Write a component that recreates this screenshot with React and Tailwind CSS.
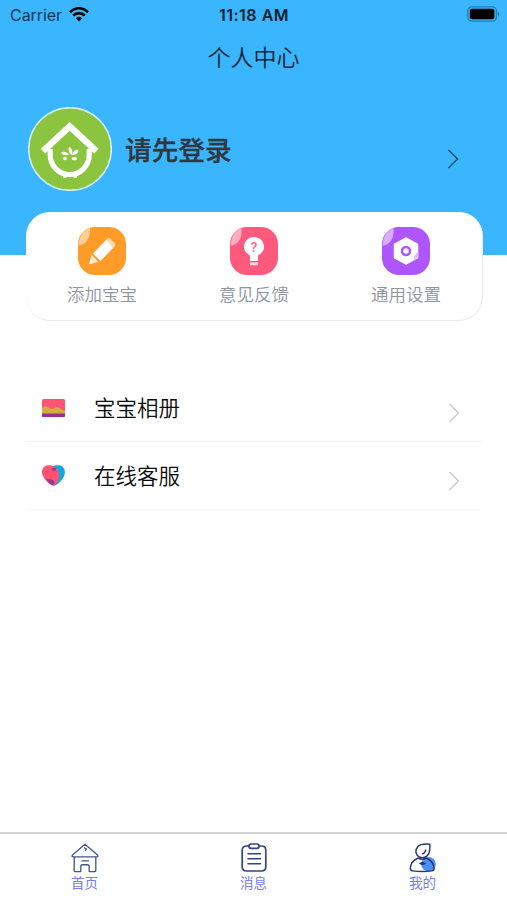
import React from "react";

function StatusBar() {
  return (
    <div className="grid h-[30px] grid-cols-3 items-center pl-[10px] pr-[7px] text-black">
      <div className="flex items-center gap-[7px]">
        <span className="text-[16px] leading-[20px] tracking-[-0.05px] text-[#10374f]">Carrier</span>
        <svg className="-mt-[1px]" width="20" height="15" viewBox="0 0 20 15" fill="none" stroke="#000" strokeWidth="2.7">
          <path d="M1 5.200C6-.1 14-.1 19 5.200" />
          <path d="M4.200 8.500c3.400-3.300 8.200-3.300 11.600 0" />
          <path d="M6.700 11.200c2-1.800 4.600-1.800 6.600 0L10 14.600Z" fill="#000" stroke="none" />
        </svg>
      </div>
      <span className="-ml-[2px] text-center text-[16px] font-semibold leading-[20px] tracking-[0.5px] text-[#06212f]">11:18 AM</span>
      <svg className="-mt-[2px] justify-self-end" width="33" height="16" viewBox="0 0 33 16">
        <rect x=".8" y=".8" width="28.6" height="14.4" rx="4" fill="none" stroke="#237fae" strokeWidth="1.3" />
        <rect x="2.8" y="2.8" width="24.6" height="10.4" rx="2" fill="#000" />
        <path d="M30.800 5.500c2 .8 2 4.200 0 5Z" fill="#237fae" />
      </svg>
    </div>
  );
}

function Avatar() {
  return (
    <svg width="84" height="84" viewBox="0 0 84 84">
      <circle cx="42" cy="42" r="41.300" fill="#8bc53f" stroke="#d9f3f5" strokeWidth="1.500" />
      <path d="M15 44.200 41.700 19.300 68.400 44.200" fill="none" stroke="#fff" strokeWidth="6.400" />
      <path d="M22.200 42v6a19.500 19.500 0 0 0 39 0v-6" fill="none" stroke="#fff" strokeWidth="5.200" />
      <path d="M35 70h3.500M45.500 70H49" stroke="#fff" strokeWidth="1.500" />
      <g fill="#fff">
        <path d="M33 45.500c2.500-1.500 6-1 8 2.300-3 .9-6.500.7-8-2.300Z" />
        <path d="M41 39.700c3.200 1.800 4.200 4.800 2.500 8.300-2.800-2.200-3.600-5-2.500-8.300Z" />
        <path d="M50.500 42.500c.2 3.500-2.300 5.500-6.500 5.500.8-3.500 3-5.500 6.500-5.500Z" />
        <ellipse cx="37" cy="51.500" rx="1.900" ry="1.700" />
        <ellipse cx="46.300" cy="51.700" rx="2.700" ry="1.600" />
      </g>
    </svg>
  );
}

function Chevron({ className }) {
  return (
    <svg className={className} width="12" height="20" viewBox="0 0 12 20" fill="none" stroke="currentColor" strokeWidth="1.600">
      <path d="m1.500 1 9 9-9 9" />
    </svg>
  );
}

function PencilIcon() {
  return (
    <svg width="48" height="48" viewBox="0 0 48 48">
      <rect width="48" height="48" rx="17" fill="#ff9c28" />
      <path d="M.6 18.500C7.500 18 12.800 11.500 12 .8 5 3.500.8 9 .6 18.500Z" fill="#ffcf96" />
      <path d="m15 26.500 13.500-14 7 8L22.500 34Z" fill="#fff" />
      <path d="m28 12.500 1.200-.9c1-.8 2.300-.8 3.300.2l4.200 4.600c.9 1 .7 2.100-.2 3L34.800 21Z" fill="#ffdcaf" />
      <path d="m13.500 27.500 7 7.500-9.200 2Z" fill="#ffe8cd" />
      <path d="m12.200 32.500 3.300 3.600-4 .9Z" fill="#fff" />
    </svg>
  );
}

function BulbIcon() {
  return (
    <svg width="48" height="48" viewBox="0 0 48 48">
      <rect width="48" height="48" rx="17" fill="#ff5a7d" />
      <path d="M.6 18.800C7.500 18 12.800 11.500 11.500 1 5 3.500.8 9 .6 18.800Z" fill="#ffafc0" />
      <path d="M24 10c-5.700 0-10 4.300-10 9.800 0 4 2.300 6.500 6 8.700V34h8v-5.500c3.700-2.200 6-4.700 6-8.700C34 14.300 29.700 10 24 10Z" fill="#fff" />
      <path d="M20 35.500h8v2.700h-8Z" fill="#ffe0e7" />
      <text x="24" y="25" textAnchor="middle" fontSize="13" fontWeight="500" fontFamily="Inter, sans-serif" fill="#ff5a7d">?</text>
    </svg>
  );
}

function SettingsIcon() {
  return (
    <svg width="48" height="48" viewBox="0 0 48 48">
      <rect width="48" height="48" rx="17" fill="#ae55fb" />
      <path d="M.6 18.800C7.500 18 12.800 11.500 11.500 1 5 3.500.8 9 .6 18.800Z" fill="#d8adff" />
      <path d="M24 11.500 35 17.700v12.600L24 36.500 13 30.300V17.700Z" fill="#fff" stroke="#fff" strokeWidth="2.500" strokeLinejoin="round" />
      <circle cx="24" cy="24" r="4" fill="#fff" stroke="#ae55fb" strokeWidth="2.500" />
      <path d="M36.300 25v4c0 1-.4 1.700-1.300 2.200L32 33c-.5-3.500 1-6.500 4.300-8Z" fill="#dfbdff" />
    </svg>
  );
}

function AlbumIcon() {
  return (
    <svg width="23" height="18" viewBox="0 0 23 18">
      <rect width="23" height="18" rx="1.500" fill="#ff5572" />
      <path d="M0 9.500C2 7 4.500 7 6.500 8.500c1.500 1.200 3 1.700 4.800 1.200C14 7.500 17 8 19.500 10.500L23 12v3H0Z" fill="#ccb039" />
      <path d="M8 11.500c1.500-1 2.500-.5 4 1l2-1.500" fill="none" stroke="#f1a23c" />
      <path d="M0 14.500h23v2c0 1-.5 1.500-1.500 1.500h-20C.5 18 0 17.500 0 16.500Z" fill="#9b2f92" />
    </svg>
  );
}

function HeartIcon() {
  return (
    <svg width="23" height="21" viewBox="0 0 23 21">
      <path d="M10.500 1.500C13 0 17.500-.3 20.300 1.500c3.200 2.500 3.200 7 1 11-2.300 4-6 7.500-9.500 8.300Z" fill="#10a9df" />
      <path d="M12.500 2.200C9-.5 4.500-.2 2 2-.8 4.500-.5 9 1.500 12c2.300 4 6 8 10 8.800 4.500-3.300 6.500-8 5.500-12.800-.5-2.500-2.300-4.500-4.500-5.800Z" fill="#ff5272" />
      <path d="M9.500 4c1-1.300 2.500-1.700 4-1l.7 2.500C12 6.500 10 6 9.500 4ZM4.500 14.500c3-1 6.500 0 8 2.500l-1 3.500C8.500 19.500 6 17 4.500 14.500Z" fill="#a13292" />
    </svg>
  );
}

function HomeIcon() {
  return (
    <svg width="28" height="30" viewBox="0 0 28 30" fill="none" stroke="#45568b" strokeWidth="1.350" strokeLinejoin="round">
      <path d="M14 1.200 26.500 12c.8.800.5 1.900-.6 1.900H2.100C1 13.900.7 12.800 1.500 12ZM3.200 14v13.800c0 .5.300.8.800.8h5.800v-5.300c0-1 .6-1.600 1.600-1.600h5.200c1 0 1.600.6 1.600 1.600v5.300H24c.5 0 .8-.3.800-.8V14" />
      <path d="m13 4.500 2.500 1.500-1.500 1.500M10.500 17.800h7.500" />
    </svg>
  );
}

function ClipboardIcon() {
  return (
    <svg width="28" height="30" viewBox="0 0 28 30" fill="none" stroke="#34457e" strokeWidth="1.700" strokeLinecap="round">
      <path d="M8.500 3H6.500C3.700 3 2.200 4.500 2.200 7.300v16.400c0 2.800 1.500 4.300 4.300 4.300h15c2.800 0 4.300-1.500 4.300-4.300V7.300C25.800 4.500 24.300 3 21.500 3h-2" />
      <rect x="9" y="1" width="10" height="4.300" rx="2" />
      <path d="M8 10.800h12.500M8 15.800h12.500M8 20.800h12.500" strokeWidth="1.600" />
    </svg>
  );
}

function ProfileIcon() {
  return (
    <svg width="28" height="30" viewBox="0 0 28 30" fill="none" stroke="#28376d" strokeWidth="1.450" strokeLinejoin="round">
      <circle cx="19.500" cy="21.200" r="7.300" fill="#4b8ff8" stroke="none" />
      <path d="M20.800 1.200c-4.500-.4-9.300-.3-12 2.500-3 3.300-2.300 8.500 1.700 10.300 3.300 1.400 7.300.3 9-2.800 1.500-2.700 1.600-6.200 1.300-10Z" fill="#fff" />
      <path d="M16.700 6.500c-.2 2.400-1.500 4-3.700 4.500M9 15c-4.500 2-7.300 5.500-7.700 10-.1 1.600.7 2.700 2.300 2.900 6.200.8 13 .8 19.200 0 1.600-.2 2.500-1.300 2.300-2.900-.6-4.500-3.500-8-7.600-10M9 15c2.500 1.400 6 1.400 8.500 0" />
      <path d="M11 20.500c1.600-1 3.400-1 5 0-1.600 1-3.400 1-5 0Z" fill="#28376d" />
    </svg>
  );
}

const actions = [
  { label: "添加宝宝", Icon: PencilIcon },
  { label: "意见反馈", Icon: BulbIcon },
  { label: "通用设置", Icon: SettingsIcon },
];

const rows = [
  { label: "宝宝相册", Icon: AlbumIcon, border: "border-[#f3f3f4]" },
  { label: "在线客服", Icon: HeartIcon, border: "border-[#f8f8f9]" },
];

const tabs = [
  { label: "首页", Icon: HomeIcon },
  { label: "消息", Icon: ClipboardIcon },
  { label: "我的", Icon: ProfileIcon },
];

export default function App() {
  return (
    <div className="flex h-[900px] w-[507px] flex-col overflow-hidden bg-white font-['Inter','Noto_Sans_CJK_SC',sans-serif]">
      <header className="h-[255px] shrink-0 bg-[#3ab6ff]">
        <StatusBar />
        <h1 className="flex h-[54px] items-center justify-center pt-[2px] text-[23px] font-[350] leading-none text-[#0c2432]">个人中心</h1>
        <div className="mt-[23px] flex h-[84px] items-center pl-[28px] pr-[48px]">
          <Avatar />
          <span className="ml-[13px] flex-1 pt-px text-[26.700px] font-medium leading-[40px] text-[#2f383e] [-webkit-text-stroke:0.3px_#2f383e]">请先登录</span>
          <Chevron className="mt-[20px] text-[#24536e]" />
        </div>
      </header>

      <section className="relative -mt-[43px] ml-[26px] mr-[24px] grid h-[109px] shrink-0 grid-cols-3 rounded-[24px] border-b border-r border-[#e9eaec] bg-white">
        {actions.map(({ label, Icon }) => (
          <div key={label} className="flex flex-col items-center pt-[15px]">
            <Icon />
            <span className="mt-[8px] text-[17.500px] font-[350] leading-[24px] text-[#90959a]">{label}</span>
          </div>
        ))}
      </section>

      <main className="ml-[26px] mr-[25px] mt-[53px] flex-1">
        {rows.map(({ label, Icon, border }) => (
          <div key={label} className={`flex h-[68px] items-center border-b pl-[16px] pr-[22px] ${border}`}>
            <Icon />
            <span className="ml-[29px] flex-1 pt-[1px] text-[21.500px] font-[350] leading-[30px] text-[#0c0c0c]">{label}</span>
            <Chevron className="mt-[10px] text-[#cecece]" />
          </div>
        ))}
      </main>

      <nav className="grid h-[68px] shrink-0 grid-cols-3 border-t-2 border-[#d3d3d4] bg-white">
        {tabs.map(({ label, Icon }) => (
          <div key={label} className="flex flex-col items-center pt-[9px]">
            <Icon />
            <span className="mt-[1px] text-[13.500px] leading-[18px] text-[#7480ef]">{label}</span>
          </div>
        ))}
      </nav>
    </div>
  );
}
